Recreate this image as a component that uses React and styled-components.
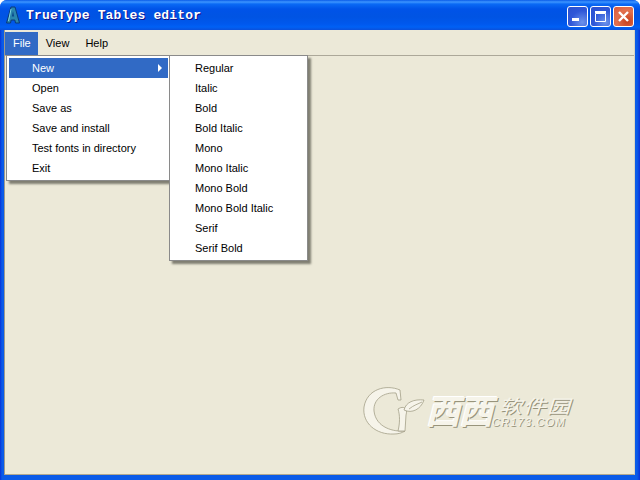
import React from 'react';
import styled, {createGlobalStyle} from 'styled-components';

const Global = createGlobalStyle`
    html, body {
        margin: 0;
        padding: 0;
        width: 640px;
        height: 480px;
        overflow: hidden;
    }
`;

// 창 전체 프레임
const Window = styled.div`
    position: relative;
    width: 640px;
    height: 480px;
    box-sizing: border-box;
    display: flex;
    flex-direction: column;
    padding: 0 4px 4px 4px;
    background: linear-gradient(90deg, #0831d9 0, #0a5be8 2px, #0a5be8 637px, #0831d9 640px);
    border-radius: 7px 7px 0 0;
    font-family: "Liberation Sans", Tahoma, sans-serif;
    font-size: 11px;
    color: #000;
`;

const TitleBar = styled.div`
    height: 30px;
    margin: 0 -4px;
    padding: 0 6px 0 6px;
    flex: none;
    display: flex;
    align-items: center;
    border-radius: 7px 7px 0 0;
    background: linear-gradient(180deg, #0a5be8 0, #3d95ff 2px, #0a6af5 4px, #0053e8 9px, #0054e3 17px, #0058ee 24px, #0061f5 27px, #0a50dc 30px);
`;

const TitleText = styled.span`
    margin-left: 6px;
    font-family: "Liberation Mono", monospace;
    font-weight: 700;
    font-size: 13px;
    letter-spacing: 0.16px;
    color: #fff;
    text-shadow: 1px 1px 0 #0f1089;
    white-space: pre;
`;

const WinButtons = styled.div`
    margin-left: auto;
    margin-top: 3px;
    display: flex;
    gap: 2px;
`;

const WinButton = styled.div`
    width: 21px;
    height: 21px;
    box-sizing: border-box;
    border: 1px solid #fff;
    border-radius: 3px;
    display: flex;
    align-items: center;
    justify-content: center;
    background: ${p => p.$close
        ? 'radial-gradient(circle at 70% 75%, #c8401c, #e2714f 55%, #d9573a)'
        : 'radial-gradient(circle at 75% 80%, #6d92ea, #2f57d8 55%, #2b50cf)'};
`;

const Client = styled.div`
    position: relative;
    flex: 1;
    margin-right: 1px;
    margin-bottom: 1px;
    display: flex;
    flex-direction: column;
    background: #ece9d8;
    border-left: 1px solid #9c9a8e;
    border-right: 1px solid #d8d5c4;
    border-bottom: 1px solid #b0a890;
`;

const MenuBar = styled.div`
    height: 26px;
    flex: none;
    box-sizing: border-box;
    padding: 2px 0 0 0;
    display: flex;
    background: #ece9d8;
    border-bottom: 1px solid #aca899;
`;

const MenuTitle = styled.div`
    height: 23px;
    line-height: 23px;
    padding: 0 ${p => p.$open ? 7 : 8}px 0 8px;
    color: ${p => p.$open ? '#fff' : '#000'};
    background: ${p => p.$open ? '#316ac5' : 'transparent'};
`;

// 펼쳐진 메뉴
const Popup = styled.div`
    position: absolute;
    top: 25px;
    left: ${p => p.$left}px;
    width: ${p => p.$width}px;
    box-sizing: border-box;
    padding: 2px;
    background: #fff;
    border: 1px solid #8a8a8a;
    box-shadow: 3px 3px 2px rgba(70, 70, 60, 0.65);
`;

const Item = styled.div`
    position: relative;
    height: 20px;
    line-height: 20px;
    padding-left: ${p => p.$indent}px;
    white-space: nowrap;
    color: ${p => p.$active ? '#fff' : '#000'};
    background: ${p => p.$active ? '#316ac5' : 'transparent'};
`;

const Arrow = styled.span`
    position: absolute;
    right: 6px;
    top: 6px;
    width: 0;
    height: 0;
    border-left: 4px solid #fff;
    border-top: 4px solid transparent;
    border-bottom: 4px solid transparent;
`;

// 오른쪽 아래 워터마크
const Watermark = styled.div`
    position: absolute;
    left: 355px;
    top: 355px;
    display: flex;
    align-items: flex-start;
`;

const LogoBig = styled.span`
    margin-left: 1px;
    margin-top: 5px;
    font-family: "Noto Sans CJK SC", sans-serif;
    font-weight: 700;
    font-size: 34px;
    line-height: 40px;
    font-style: italic;
    letter-spacing: -1px;
    color: #f6f4ea;
    text-shadow: 1px 1px 0 #98947c, -1px -1px 0 #fff;
`;

const LogoSide = styled.div`
    display: flex;
    flex-direction: column;
    margin-top: 12px;
`;

const LogoSmall = styled.span`
    display: block;
    padding-left: 7px;
    font-family: "Noto Sans CJK SC", sans-serif;
    font-size: 23px;
    line-height: 20px;
    font-style: italic;
    letter-spacing: 1px;
    color: #f6f4ea;
    text-shadow: 1px 1px 0 #98947c;
    transform: scaleY(0.8);
    transform-origin: 0 0;
`;

const LogoUrl = styled.span`
    font-family: "Liberation Sans", sans-serif;
    font-size: 11px;
    line-height: 10px;
    font-style: italic;
    letter-spacing: 1.2px;
    color: #f6f4ea;
    text-shadow: 1px 1px 0 #98947c;
`;

const fileItems = ['New', 'Open', 'Save as', 'Save and install', 'Test fonts in directory', 'Exit'];
const newItems = ['Regular', 'Italic', 'Bold', 'Bold Italic', 'Mono', 'Mono Italic', 'Mono Bold', 'Mono Bold Italic', 'Serif', 'Serif Bold'];

function AppIcon() {
    return (
        <svg width="14" height="18" viewBox="0 0 14 18">
            <path d="M0.5 17 L5 1 L9 1 L13.5 17 L9.5 17 L8.8 14 L5.2 14 L4.5 17 Z" fill="#2a86ad" stroke="#0b3a78" strokeWidth="1" />
            <path d="M5.8 10.5 L7 5 L8.2 10.5 Z" fill="#0b4a8c" />
            <path d="M5 3 L2.5 15" stroke="#7fd4e4" strokeWidth="1" />
        </svg>
    );
}

function LogoMark() {
    return (
        <svg width="65" height="52" viewBox="0 0 65 52">
            <g fill="#f6f4ea" stroke="#a39f88" strokeWidth="0.8">
                <path d="M40 5 C26 -1 7 4 4 22 C2 38 16 50 34 49 C38 49 42 48 45 46 C34 47 16 43 14 26 C13 14 24 7 36 8 L38 15 L41 15 Z" />
                <path d="M38 24 C44 20 48 24 46 30 L45 46 L38 46 C40 38 40 30 38 24 Z" />
                <path d="M44 25 C46 17 54 14 64 15 C61 24 52 29 44 25 Z" />
            </g>
            <path d="M49 24 C54 20 58 19 62 17" fill="none" stroke="#a39f88" strokeWidth="0.8" />
        </svg>
    );
}

export default function App() {
    return (
        <Window>
            <Global />
            <TitleBar>
                <AppIcon />
                <TitleText>TrueType Tables editor</TitleText>
                <WinButtons>
                    <WinButton>
                        <svg width="13" height="13" viewBox="0 0 13 13"><rect x="1" y="8" width="7" height="3" fill="#fff" /></svg>
                    </WinButton>
                    <WinButton>
                        <svg width="13" height="13" viewBox="0 0 13 13"><path d="M1.5 3.5 H11.5 V11.5 H1.5 Z" fill="none" stroke="#fff" /><rect x="1" y="1" width="11" height="2" fill="#fff" /></svg>
                    </WinButton>
                    <WinButton $close>
                        <svg width="13" height="13" viewBox="0 0 13 13"><path d="M2 2 L11 11 M11 2 L2 11" stroke="#fff" strokeWidth="2.4" /></svg>
                    </WinButton>
                </WinButtons>
            </TitleBar>
            <Client>
                <MenuBar>
                    <MenuTitle $open>File</MenuTitle>
                    <MenuTitle>View</MenuTitle>
                    <MenuTitle>Help</MenuTitle>
                </MenuBar>
                <Popup $left={1} $width={165}>
                    {fileItems.map((name, i) => (
                        <Item key={name} $indent={23} $active={i === 0}>
                            {name}
                            {i === 0 && <Arrow />}
                        </Item>
                    ))}
                </Popup>
                <Popup $left={164} $width={139}>
                    {newItems.map(name => <Item key={name} $indent={23}>{name}</Item>)}
                </Popup>
                <Watermark>
                    <LogoMark />
                    <LogoBig>西西</LogoBig>
                    <LogoSide>
                        <LogoSmall>软件园</LogoSmall>
                        <LogoUrl>CR173.COM</LogoUrl>
                    </LogoSide>
                </Watermark>
            </Client>
        </Window>
    );
}
